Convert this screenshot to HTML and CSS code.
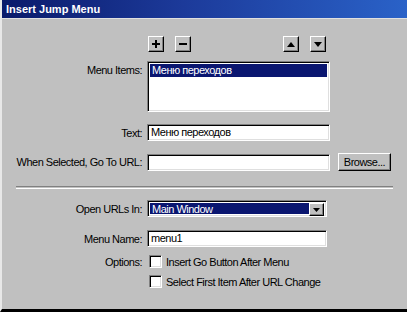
FILE: index.html
```html
<!DOCTYPE html>
<html>
<head>
<meta charset="utf-8">
<link rel="stylesheet" href="styles.css">
</head>
<body>
<div class="window">
  <div class="titlebar">Insert Jump Menu</div>
  <div class="content">
    <div class="toolrow">
      <div class="tgroup">
        <div class="btn tb"><svg width="8" height="8" viewBox="0 0 8 8"><path d="M3 0h2v3h3v2H5v3H3V5H0V3h3z" fill="#000"/></svg></div>
        <div class="btn tb"><svg width="8" height="8" viewBox="0 0 8 8"><path d="M0 3h8v2H0z" fill="#000"/></svg></div>
      </div>
      <div class="tgroup">
        <div class="btn tb"><svg width="8" height="5" viewBox="0 0 8 5"><path d="M4 0L8 5H0z" fill="#000"/></svg></div>
        <div class="btn tb"><svg width="8" height="5" viewBox="0 0 8 5"><path d="M0 0h8L4 5z" fill="#000"/></svg></div>
      </div>
    </div>

    <div class="row row-list">
      <div class="label top">Menu Items:</div>
      <div class="listbox sunken"><div class="item sel">Меню переходов</div></div>
    </div>

    <div class="row row-text">
      <div class="label">Text:</div>
      <div class="input sunken w183">Меню переходов</div>
    </div>

    <div class="row row-url">
      <div class="label">When Selected, Go To URL:</div>
      <div class="input sunken w183"></div>
      <div class="btn browse">Browse...</div>
    </div>

    <div class="sep"></div>

    <div class="row row-open">
      <div class="label">Open URLs In:</div>
      <div class="select sunken w180">
        <div class="sel-val">Main Window</div>
        <div class="btn dd"><svg width="7" height="4" viewBox="0 0 7 4"><path d="M0 0h7L3.5 4z" fill="#000"/></svg></div>
      </div>
    </div>

    <div class="row row-name">
      <div class="label">Menu Name:</div>
      <div class="input sunken w180">menu1</div>
    </div>

    <div class="row row-opt1">
      <div class="label">Options:</div>
      <div class="check"><span class="box sunken"></span><span>Insert Go Button After Menu</span></div>
    </div>
    <div class="row row-opt2">
      <div class="label"></div>
      <div class="check"><span class="box sunken"></span><span>Select First Item After URL Change</span></div>
    </div>
  </div>
</div>
</body>
</html>
```

FILE: styles.css
```css
html, body {
  margin: 0;
  padding: 0;
  background: #c0c0c0;
}
.window {
  width: 407px;
  height: 312px;
  box-sizing: border-box;
  background: #c0c0c0;
  border-left: 2px solid #e8e8e8;
  border-bottom: 3px solid #000;
  font-family: "Liberation Sans", Arial, sans-serif;
  font-size: 11px;
  letter-spacing: -0.5px;
  color: #000;
  overflow: hidden;
}
.titlebar {
  height: 18px;
  line-height: 18px;
  margin-left: -2px;
  padding-left: 6px;
  background: linear-gradient(to right, #0a1a6a 0%, #1c3a9a 45%, #2a62c8 100%);
  color: #fff;
  font-weight: bold;
  font-size: 11px;
  letter-spacing: 0;
  border-bottom: 1px solid #e0e0e0;
}
.content {
  padding-top: 17px;
}
.toolrow {
  display: flex;
  gap: 92px;
  margin-left: 146px;
  height: 16px;
}
.tgroup {
  display: flex;
  gap: 11px;
}
.btn {
  box-sizing: border-box;
  background: #c0c0c0;
  border-top: 1px solid #fff;
  border-left: 1px solid #fff;
  border-right: 1px solid #000;
  border-bottom: 1px solid #000;
  box-shadow: inset -1px -1px #808080;
  display: flex;
  align-items: center;
  justify-content: center;
}
.tb {
  width: 16px;
  height: 16px;
}
.row {
  display: flex;
  align-items: center;
}
.label {
  width: 145px;
  box-sizing: border-box;
  padding-right: 5px;
  text-align: right;
  flex: none;
  white-space: nowrap;
}
.label.top {
  align-self: flex-start;
  padding-top: 3px;
}
.sunken {
  box-sizing: border-box;
  background: #fff;
  border-top: 1px solid #808080;
  border-left: 1px solid #808080;
  border-right: 1px solid #fff;
  border-bottom: 1px solid #fff;
  box-shadow: inset 1px 1px #000, inset -1px -1px #dfdfdf;
}
.w183 { width: 183px; }
.w180 { width: 180px; }
.row-list { margin-top: 9px; }
.listbox {
  width: 183px;
  height: 51px;
  padding: 2px;
}
.item {
  height: 13px;
  line-height: 13px;
  padding-left: 2px;
}
.item.sel {
  background: #0a1670;
  color: #fff;
}
.input {
  height: 17px;
  line-height: 15px;
  padding-left: 3px;
}
.row-text { margin-top: 12px; }
.row-url { margin-top: 12px; }
.browse {
  width: 53px;
  height: 18px;
  margin-left: 8px;
}
.sep {
  margin: 15px 14px 0 14px;
  height: 1px;
  border-top: 1px solid #808080;
  border-bottom: 1px solid #fff;
}
.row-open { margin-top: 11px; }
.select {
  height: 17px;
  display: flex;
  padding: 2px;
}
.sel-val {
  flex: 1;
  background: #0a1670;
  color: #fff;
  line-height: 13px;
  padding-left: 2px;
}
.dd {
  width: 15px;
  height: 13px;
  margin-left: 0;
}
.row-name { margin-top: 13px; }
.row-opt1 { margin-top: 8px; }
.row-opt2 { margin-top: 7px; }
.check {
  display: flex;
  align-items: center;
  gap: 4px;
  margin-left: 2px;
}
.box {
  width: 13px;
  height: 13px;
  flex: none;
}
```
